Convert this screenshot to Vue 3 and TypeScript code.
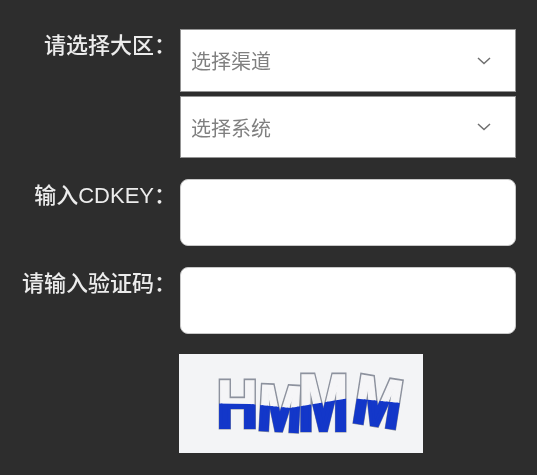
<script setup lang="ts">
import { ref } from 'vue'

const selects = ['选择渠道', '选择系统']
const cdkey = ref('')
const code = ref('')

// letters of the captcha, each with its own tilt
const letters = [
  { ch: 'H', x: 217, y: 427, size: 67, sx: 0.84, rot: 0 },
  { ch: 'M', x: 257, y: 429, size: 64, sx: 0.82, rot: 3 },
  { ch: 'M', x: 298, y: 430, size: 80, sx: 0.76, rot: 0 },
  { ch: 'M', x: 351, y: 421, size: 68, sx: 0.84, rot: 9 }
]

const transformOf = (l: { x: number; y: number; rot: number; sx: number }) =>
  `translate(${l.x} ${l.y}) rotate(${l.rot}) scale(${l.sx} 1)`
</script>

<template>
  <div class="page">
    <form class="form">
      <label class="label">请选择大区<span class="colon">：</span></label>
      <div class="select-group">
        <div v-for="item in selects" :key="item" class="select">
          <span>{{ item }}</span>
          <svg class="arrow" width="14" height="8" viewBox="0 0 14 8">
            <path d="M1 1l6 5.5L13 1" fill="none" stroke="#6f6f6f" stroke-width="1.5" />
          </svg>
        </div>
      </div>

      <label class="label">输入CDKEY<span class="colon">：</span></label>
      <input v-model="cdkey" class="input" type="text" />

      <label class="label">请输入验证码<span class="colon">：</span></label>
      <input v-model="code" class="input" type="text" />

      <div class="captcha">
        <svg width="244" height="99" viewBox="179 354 244 99">
          <defs>
            <clipPath id="lower">
              <polygon points="179,403 250,404 290,408 350,398 400,403 423,403 423,453 179,453" />
            </clipPath>
          </defs>
          <rect x="179" y="354" width="244" height="99" fill="#f3f4f6" />
          <g v-for="(l, i) in letters" :key="i" :transform="transformOf(l)">
            <text class="captcha-text" :font-size="l.size" fill="#8d929e" stroke="#8d929e" stroke-width="5">{{ l.ch }}</text>
            <text class="captcha-text" :font-size="l.size" fill="#f5f5f7" stroke="#f5f5f7" stroke-width="1.5">{{ l.ch }}</text>
          </g>
          <g clip-path="url(#lower)">
            <g v-for="(l, i) in letters" :key="i" :transform="transformOf(l)">
              <text class="captcha-text" :font-size="l.size" fill="#1337c9" stroke="#1337c9" stroke-width="4">{{ l.ch }}</text>
            </g>
          </g>
        </svg>
      </div>
    </form>
  </div>
</template>

<style>
html,
body {
  margin: 0;
  background-color: #2d2d2d;
}
</style>

<style scoped>
.page {
  box-sizing: border-box;
  width: 537px;
  height: 475px;
  padding-top: 29px;
  background-color: #2d2d2d;
  font-family: "Liberation Sans", "Noto Sans CJK SC", sans-serif;
  filter: blur(0.6px);
  overflow: hidden;
}

.form {
  display: grid;
  grid-template-columns: 165px 336px;
  column-gap: 15px;
  row-gap: 21px;
}

.label {
  font-size: 22px;
  font-weight: 500;
  line-height: 33px;
  color: #ececec;
  text-align: right;
  white-space: nowrap;
}

/* narrow colon, the full width one leaves too much room */
.colon {
  display: inline-block;
  width: 11px;
  font-feature-settings: "palt";
  text-align: right;
}

.select-group {
  display: flex;
  flex-direction: column;
  gap: 4px;
}

.select {
  box-sizing: border-box;
  height: 63px;
  display: flex;
  align-items: center;
  justify-content: space-between;
  padding: 0 24px 0 10px;
  background-color: #fff;
  border: 1px solid #949494;
  font-size: 20px;
  color: #808080;
}

.select + .select {
  height: 62px;
}

.arrow {
  flex: none;
}

.input {
  box-sizing: border-box;
  width: 336px;
  height: 67px;
  padding: 0 10px;
  background-color: #fff;
  border: 1px solid #c8c8c8;
  border-radius: 8px;
  outline: none;
  font-size: 20px;
}

.captcha {
  grid-column: 2;
  height: 99px;
  margin-top: -1px;
  margin-left: -1px;
}

.captcha svg {
  display: block;
}

.captcha-text {
  font-family: "Liberation Sans", sans-serif;
  font-weight: 700;
}
</style>
